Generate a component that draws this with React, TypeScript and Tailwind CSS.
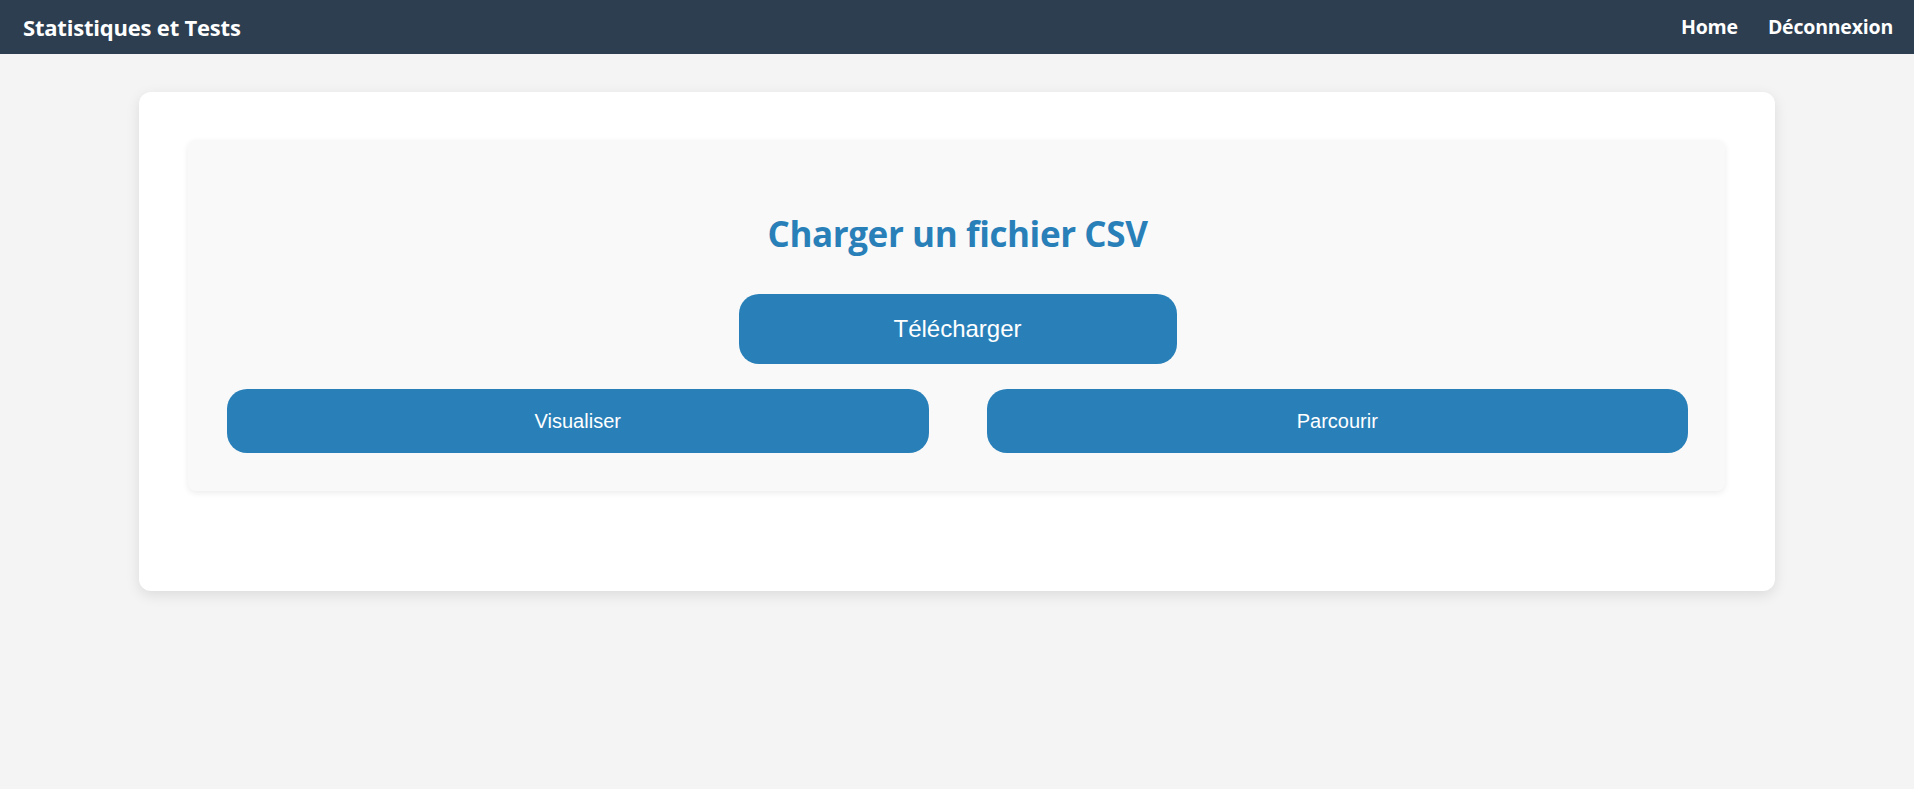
export default function App() {
  return (
    <div className="min-h-[789px] bg-[#f4f4f4] font-['Open_Sans',sans-serif]">
      {/* Navbar */}
      <nav className="flex h-[54px] items-center justify-between bg-[#2c3e50] pl-[23px] pr-[21px] text-white">
        <span className="text-[22px] font-bold tracking-[-0.2px]">Statistiques et Tests</span>
        <div className="flex items-center gap-[30px] text-[19.5px] font-bold tracking-[-0.2px]">
          <a href="#">Home</a>
          <a href="#">Déconnexion</a>
        </div>
      </nav>

      {/* Card */}
      <div className="mx-[139px] mt-[38px] rounded-[12px] bg-white pt-[48px] pr-[50px] pb-[100px] pl-[49px] shadow-[0_4px_14px_rgba(0,0,0,0.1)]">
        <div className="rounded-[8px] bg-[#f9f9f9] pt-[72px] pr-[37px] pb-[38px] pl-[39px] shadow-[0_2px_6px_rgba(0,0,0,0.08)]">
          <h2 className="text-center text-[35px] leading-[44px] font-bold tracking-[-0.4px] text-[#2980b9]">
            Charger un fichier CSV
          </h2>
          <div className="mt-[38px] flex justify-center">
            <button className="h-[70px] w-[438px] rounded-[20px] bg-[#2980b9] font-['Liberation_Sans',Arial,sans-serif] text-[24px] text-white">
              Télécharger
            </button>
          </div>
          <div className="mt-[25px] flex gap-[58px]">
            <button className="h-[64px] flex-1 rounded-[20px] bg-[#2980b9] font-['Liberation_Sans',Arial,sans-serif] text-[20px] text-white">
              Visualiser
            </button>
            <button className="h-[64px] flex-1 rounded-[20px] bg-[#2980b9] font-['Liberation_Sans',Arial,sans-serif] text-[20px] text-white">
              Parcourir
            </button>
          </div>
        </div>
      </div>
    </div>
  );
}
